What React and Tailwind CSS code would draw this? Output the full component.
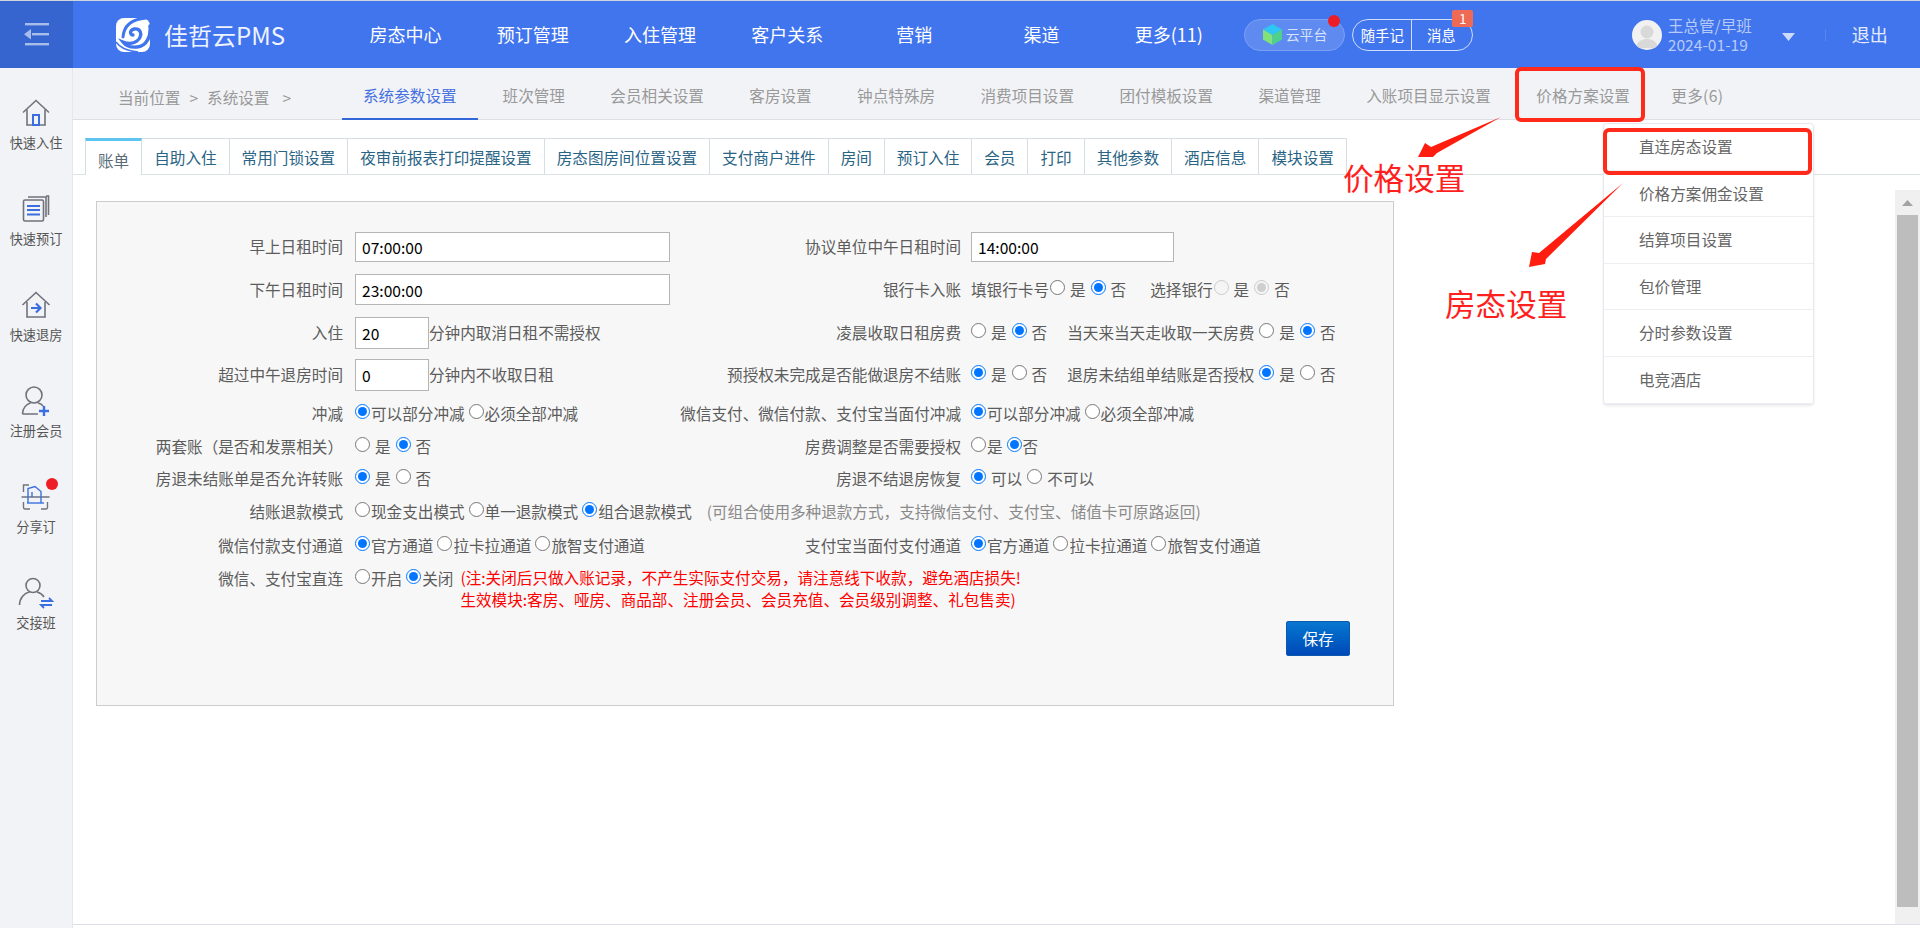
import { useState } from 'react';

const navItems = ['房态中心', '预订管理', '入住管理', '客户关系', '营销', '渠道', '更多(11)'];
const subTabs = ['班次管理', '会员相关设置', '客房设置', '钟点特殊房', '消费项目设置', '团付模板设置', '渠道管理', '入账项目显示设置', '价格方案设置'];
const innerTabs = ['自助入住', '常用门锁设置', '夜审前报表打印提醒设置', '房态图房间位置设置', '支付商户进件', '房间', '预订入住', '会员', '打印', '其他参数', '酒店信息', '模块设置'];
const menuItems = ['直连房态设置', '价格方案佣金设置', '结算项目设置', '包价管理', '分时参数设置', '电竞酒店'];

const IconHouse = () => (
  <svg width="30" height="28" viewBox="0 0 30 28" fill="none" stroke="#6f737c" strokeWidth="1.6">
    <path d="M2 13.5 15 1.5l13 12" />
    <path d="M6 10.5V26h18V10.5" />
    <rect x="12" y="16" width="6" height="10" stroke="#3b6fe0" strokeWidth="2" />
  </svg>
);

const IconBook = () => (
  <svg width="28" height="28" viewBox="0 0 28 28" fill="none" stroke="#6f737c" strokeWidth="1.6">
    <rect x="1.5" y="5" width="20" height="21" rx="1.5" />
    <path d="M6 2h18v20M24 1h2.5v19" />
    <path d="M5 11h13M5 15h13M5 19.5h13" stroke="#3b6fe0" strokeWidth="2.2" />
  </svg>
);

const IconCheckout = () => (
  <svg width="30" height="28" viewBox="0 0 30 28" fill="none" stroke="#6f737c" strokeWidth="1.6">
    <path d="M1.5 14 15 1.5 28.5 14" />
    <path d="M6 11v15h18V11" />
    <path d="M10 17h9M15 12.5l4.5 4.5-4.5 4.5" stroke="#3b6fe0" strokeWidth="2.2" />
  </svg>
);

const IconMember = () => (
  <svg width="30" height="32" viewBox="0 0 30 32" fill="none" stroke="#6f737c" strokeWidth="1.6">
    <circle cx="13" cy="10" r="8" />
    <path d="M1.5 29c0-6 4-10 8-11M17 18c2 .5 4 1.5 5 3M1.5 29H17" />
    <path d="M23 21v10M18 26h10" stroke="#3b6fe0" strokeWidth="2.4" />
  </svg>
);

const IconShare = () => (
  <svg width="30" height="28" viewBox="0 0 30 28" fill="none" stroke="#6f737c" strokeWidth="1.4">
    <path d="M8 2H2.5v7M2.5 19v5.5a1.5 1.5 0 0 0 1.5 1.5h5M20 26h5a1.5 1.5 0 0 0 1.5-1.5V19M.5 14h28" />
    <path d="M7 20V5.5l7-2 6 5V20M11 9v5" stroke="#3b6fe0" strokeWidth="1.4" />
    <path d="M6 20h17" stroke="#3b6fe0" strokeWidth="1.4" />
  </svg>
);

const IconShift = () => (
  <svg width="36" height="32" viewBox="0 0 36 32" fill="none" stroke="#6f737c" strokeWidth="1.6">
    <circle cx="15" cy="8.5" r="7" />
    <path d="M1.5 28c0-7 5-12 10-13M19 15c3 .8 5.5 2.5 7 5" />
    <path d="M23 24h11l-3-3M34 28H23l3 3" stroke="#3b6fe0" strokeWidth="1.8" />
  </svg>
);

const sideItems = [
  { label: '快速入住', icon: <IconHouse /> },
  { label: '快速预订', icon: <IconBook /> },
  { label: '快速退房', icon: <IconCheckout /> },
  { label: '注册会员', icon: <IconMember /> },
  { label: '分享订', icon: <IconShare />, dot: true },
  { label: '交接班', icon: <IconShift /> },
];

function Logo() {
  return (
    <svg width="34" height="34" viewBox="0 0 34 34" fill="none">
      <rect width="34" height="34" rx="8" fill="#fff" />
      <path d="M30 0C18 1 8 6 7 19" stroke="#4175ee" strokeWidth="3" strokeLinecap="round" />
      <path d="M34 8c1 10-3 20-13 21-6 .6-11-1-14-5 5 2 10 2 14-1 4-3 5-8 2-11-3-2-7-1-8 1-1 2 0 4 2 4" stroke="#4175ee" strokeWidth="3.4" strokeLinecap="round" />
      <path d="M0 24c4 6 11 9 22 10" stroke="#4175ee" strokeWidth="1.6" />
    </svg>
  );
}

function Radio({ checked, disabled, name }) {
  return <input type="radio" name={name} defaultChecked={checked} disabled={disabled} className="w-[15px] h-[15px] -translate-y-[2px] shrink-0" />;
}

// wide: the " 是 " kind of option, a space on each side of the text
function Opt({ name, text, checked, disabled, wide }) {
  return (
    <label className={wide ? 'flex items-center gap-[5px] mr-[5px]' : 'flex items-center gap-[1px] mr-[4px]'}>
      <Radio name={name} checked={checked} disabled={disabled} />
      <span>{text}</span>
    </label>
  );
}

function YesNo({ name, yes }) {
  return (
    <>
      <Opt wide name={name} text="是" checked={yes} />
      <Opt wide name={name} text="否" checked={!yes} />
    </>
  );
}

function Row({ h, label, children, rightLabel, right }) {
  return (
    <div className={`flex items-center whitespace-nowrap ${h}`}>
      <div className="w-[246px] mr-3 text-right">{label}</div>
      <div className={rightLabel ? 'w-[320px] flex items-center' : 'flex-1 flex items-center'}>{children}</div>
      {rightLabel && (
        <>
          <div className="w-[286px] mr-[10px] text-right">{rightLabel}</div>
          <div className="flex items-center">{right}</div>
        </>
      )}
    </div>
  );
}

function TextInput({ value, className }) {
  return (
    <input
      readOnly
      defaultValue={value}
      className={`border border-[#b5b5b5] bg-white text-black pl-[6px] outline-none ${className}`}
    />
  );
}

export default function App() {
  const [activeSub] = useState('系统参数设置');

  return (
    <div className="relative w-full h-[928px] overflow-hidden bg-white text-[15.6px] text-[#5c5c5c] font-['Noto_Sans_CJK_SC','Liberation_Sans',sans-serif]">
      {/* Top bar */}
      <div className="flex items-center h-[68px] bg-[#4175ee] border-t border-[#cfd4de] text-white">
        <div className="w-[73px] h-full bg-[#3765cf] flex items-center justify-center shrink-0">
          <svg width="26" height="23" viewBox="0 0 26 23" fill="#a9bdec">
            <rect x="1" y="0" width="24" height="2.4" />
            <rect x="8" y="10" width="17" height="2.4" />
            <rect x="1" y="20" width="24" height="2.4" />
            <path d="M0 11.200 7 6v10.500z" />
          </svg>
        </div>
        <div className="w-[269px] pl-[43px] flex items-center shrink-0">
          <Logo />
          <span className="ml-[14px] text-[24px] text-[#eef3ff] whitespace-nowrap">佳哲云PMS</span>
        </div>
        {navItems.map((item) => (
          <div key={item} className="w-[127.2px] text-center text-[18px] shrink-0 whitespace-nowrap">
            {item}
          </div>
        ))}
        <div className="relative ml-[11.5px] w-[101px] h-[32px] rounded-full bg-[#5f8bf1] border border-[#7ba0f4] flex items-center pl-[16px] gap-[2px] shrink-0">
          <svg width="23" height="23" viewBox="0 0 23 23">
            <path d="M11.500 1 21 6.500 11.500 12 2 6.500z" fill="#2ec6f5" />
            <path d="M2 6.500 11.500 12v10L2 16.500z" fill="#82e27a" />
            <path d="M21 6.500 11.500 12v10L21 16.500z" fill="#4fd18b" />
          </svg>
          <span className="text-[13.8px] text-[#d8e3fb] whitespace-nowrap">云平台</span>
          <span className="absolute right-[4px] -top-[5px] w-[12px] h-[12px] rounded-full bg-[#ee1c25]" />
        </div>
        <div className="relative ml-[7.500px] w-[121px] h-[32px] rounded-full border border-[#cfdcfa] flex items-center text-[14.4px] shrink-0">
          <span className="w-[59px] h-full flex items-center justify-center border-r border-[#cfdcfa]">随手记</span>
          <span className="flex-1 text-center pr-[2px]">消息</span>
          <span className="absolute -right-[1px] -top-[10px] w-[21px] h-[17px] bg-[#ef6a55] rounded-[2px] flex items-center justify-center text-[13px] leading-none">1</span>
        </div>
        <div className="ml-[158.500px] w-[30px] h-[30px] rounded-full bg-[#f1f1f1] overflow-hidden shrink-0">
          <svg width="30" height="30" viewBox="0 0 30 30" fill="#d9d9d9">
            <circle cx="15" cy="12" r="6.500" />
            <path d="M4 28c1-7 6-9 11-9s10 2 11 9z" />
          </svg>
        </div>
        <div className="ml-[6px] w-[114px] pt-[1px] text-[#b7caf8] text-[15.6px] leading-[19px] shrink-0 whitespace-nowrap">
          <div>王总管/早班</div>
          <div>2024-01-19</div>
        </div>
        <svg width="13" height="8" viewBox="0 0 13 8" fill="#cddafa" className="mt-[4px] shrink-0">
          <path d="M0 0h13L6.500 8z" />
        </svg>
        <div className="ml-[30px] w-px h-[12px] bg-[#5a86ea] shrink-0" />
        <div className="ml-[26px] text-[18px] text-[#e4ebfd] whitespace-nowrap">退出</div>
      </div>

      <div className="flex h-[860px]">
        {/* Left quick actions */}
        <div className="w-[73px] shrink-0 bg-[#f2f3f7] border-r border-[#e4e7f1] pt-[28.5px]">
          {sideItems.map((item) => (
            <div key={item.label} className="relative h-[96px] flex flex-col items-center text-[13.2px] text-[#555]">
              <div className="h-[32px] flex items-center justify-center">{item.icon}</div>
              <div className="mt-[5px] leading-[18px] whitespace-nowrap">{item.label}</div>
              {item.dot && <span className="absolute left-[46px] -top-[3px] w-[12px] h-[12px] rounded-full bg-[#ee1c25]" />}
            </div>
          ))}
        </div>

        <div className="flex-1 flex flex-col min-w-0 h-[857px] border-b border-[#dcdfe6]">
          {/* Sub navigation */}
          <div className="flex items-stretch h-[52px] bg-[#f2f3f7] border-b border-[#dcdfe6] text-[#999] whitespace-nowrap shrink-0">
            <div className="w-[269px] pl-[45px] pt-[19px] leading-[20px] flex gap-[9px] shrink-0">
              <span>当前位置</span>
              <span>&gt;</span>
              <span>系统设置</span>
              <span className="ml-[4px]">&gt;</span>
            </div>
            <div className="px-[21px] pt-[17px] leading-[20px] text-[#4470e0] border-b-2 border-[#3366d8] h-[52px]">{activeSub}</div>
            <div className="flex gap-[5.4px] ml-[5px]">
              {subTabs.map((tab) => (
                <div key={tab} className="px-5 pt-[17px] leading-[20px]">
                  {tab}
                </div>
              ))}
              <div className="pl-4 pt-[17px] leading-[20px] tracking-[0.3px]">更多(6)</div>
            </div>
          </div>

          {/* Inner tabs */}
          <div className="mt-[18px] h-[37px] pl-3 flex border-b border-[#dde2e5] text-[#2a6485] whitespace-nowrap shrink-0">
            <div className="h-[37px] px-3 pt-[7px] leading-[24px] bg-white border-x border-[#d5dee2] border-t-[3px] border-t-[#5ec5f0] text-[#5b6b76]">账单</div>
            {innerTabs.map((tab) => (
              <div key={tab} className="h-[36px] px-3 pt-[6px] leading-[24px] border-t border-r border-[#d5dee2]">
                {tab}
              </div>
            ))}
          </div>

          <div className="flex flex-1 min-h-0">
            {/* Settings form */}
            <div className="flex-1 pl-[23px] pt-[26px]">
              <div className="w-[1298px] h-[505px] bg-[#f7f7f7] border border-[#ccc] pt-[23px]">
                <Row h="h-[43px]" label="早上日租时间" rightLabel="协议单位中午日租时间" right={<TextInput value="14:00:00" className="w-[203px] h-[30px]" />}>
                  <TextInput value="07:00:00" className="w-[315px] h-[30px]" />
                </Row>
                <Row
                  h="h-[43px]"
                  label="下午日租时间"
                  rightLabel="银行卡入账"
                  right={
                    <>
                      <span className="mr-[1px]">填银行卡号</span>
                      <YesNo name="bankCard" />
                      <span className="ml-[19px] mr-[1px]">选择银行</span>
                      <Opt wide disabled name="bank" text="是" />
                      <Opt wide disabled checked name="bank" text="否" />
                    </>
                  }
                >
                  <TextInput value="23:00:00" className="w-[315px] h-[31px]" />
                </Row>
                <Row
                  h="h-[43px]"
                  label="入住"
                  rightLabel="凌晨收取日租房费"
                  right={
                    <>
                      <YesNo name="dawn" />
                      <span className="ml-[15px] mr-[5px]">当天来当天走收取一天房费</span>
                      <YesNo name="sameDay" />
                    </>
                  }
                >
                  <TextInput value="20" className="w-[74px] h-[32px]" />
                  <span>分钟内取消日租不需授权</span>
                </Row>
                <Row
                  h="h-[42px]"
                  label="超过中午退房时间"
                  rightLabel="预授权未完成是否能做退房不结账"
                  right={
                    <>
                      <YesNo name="preAuth" yes />
                      <span className="ml-[15px] mr-[5px]">退房未结组单结账是否授权</span>
                      <YesNo name="groupAuth" yes />
                    </>
                  }
                >
                  <TextInput value="0" className="w-[74px] h-[32px]" />
                  <span>分钟内不收取日租</span>
                </Row>
                <Row
                  h="h-[36px]"
                  label="冲减"
                  rightLabel="微信支付、微信付款、支付宝当面付冲减"
                  right={
                    <>
                      <Opt checked name="payOffset" text="可以部分冲减" />
                      <Opt name="payOffset" text="必须全部冲减" />
                    </>
                  }
                >
                  <Opt checked name="offset" text="可以部分冲减" />
                  <Opt name="offset" text="必须全部冲减" />
                </Row>
                <Row
                  h="h-[29px]"
                  label="两套账（是否和发票相关）"
                  rightLabel="房费调整是否需要授权"
                  right={
                    <>
                      <Opt name="adjust" text="是" />
                      <Opt checked name="adjust" text="否" />
                    </>
                  }
                >
                  <YesNo name="twoBooks" />
                </Row>
                <Row
                  h="h-[36px]"
                  label="房退未结账单是否允许转账"
                  rightLabel="房退不结退房恢复"
                  right={
                    <>
                      <Opt wide checked name="restore" text="可以" />
                      <Opt wide name="restore" text="不可以" />
                    </>
                  }
                >
                  <YesNo name="transfer" yes />
                </Row>
                <Row h="h-[30px]" label="结账退款模式">
                  <Opt name="refund" text="现金支出模式" />
                  <Opt name="refund" text="单一退款模式" />
                  <Opt checked name="refund" text="组合退款模式" />
                  <span className="ml-[11px] text-[#8a8a8a]">(可组合使用多种退款方式，支持微信支付、支付宝、储值卡可原路返回)</span>
                </Row>
                <Row
                  h="h-[38px]"
                  label="微信付款支付通道"
                  rightLabel="支付宝当面付支付通道"
                  right={
                    <>
                      <Opt checked name="aliChannel" text="官方通道" />
                      <Opt name="aliChannel" text="拉卡拉通道" />
                      <Opt name="aliChannel" text="旅智支付通道" />
                    </>
                  }
                >
                  <Opt checked name="wxChannel" text="官方通道" />
                  <Opt name="wxChannel" text="拉卡拉通道" />
                  <Opt name="wxChannel" text="旅智支付通道" />
                </Row>
                <div className="flex items-start h-[45px] pt-[1px] whitespace-nowrap">
                  <div className="w-[246px] mr-3 text-right leading-[24px]">微信、支付宝直连</div>
                  <div className="flex items-start leading-[24px]">
                    <div className="flex items-center h-[24px]">
                      <Opt name="direct" text="开启" />
                      <Opt checked name="direct" text="关闭" />
                    </div>
                    <div className="ml-[3px] text-[#f00] leading-[22px]">
                      <div>(注:关闭后只做入账记录，不产生实际支付交易，请注意线下收款，避免酒店损失!</div>
                      <div>生效模块:客房、哑房、商品部、注册会员、会员充值、会员级别调整、礼包售卖)</div>
                    </div>
                  </div>
                </div>
                <div className="flex justify-end pr-[43px] mt-[11px]">
                  <button className="w-[64px] h-[35px] rounded-[2px] text-white bg-gradient-to-b from-[#0a77cf] to-[#0048b8] border border-[#0a5ab0]">保存</button>
                </div>
              </div>
            </div>

            {/* Scrollbar */}
            <div className="w-[25px] shrink-0 mt-[15px] bg-[#f0f0f0] flex flex-col items-center">
              <div className="h-[25px] flex items-center justify-center">
                <svg width="11" height="6" viewBox="0 0 11 6" fill="#a3a3a3">
                  <path d="M5.500 0 11 6H0z" />
                </svg>
              </div>
              <div className="w-[21px] h-[692px] bg-[#bdbdbd]" />
            </div>
          </div>
        </div>
      </div>

      {/* Hover menu */}
      <div className="absolute left-[1603px] top-[123px] w-[211px] h-[282px] bg-white border border-[#e6e8f0] rounded-[4px] shadow-[0_1px_3px_rgba(0,0,0,0.08)] text-[#666]">
        {menuItems.map((item) => (
          <div key={item} className="h-[46.6px] pl-[35px] flex items-center border-b border-[#eeeef2] whitespace-nowrap">
            {item}
          </div>
        ))}
      </div>

      {/* Annotations drawn on the screenshot */}
      <div className="absolute left-[1515px] top-[67px] w-[130px] h-[55px] border-4 border-[#ff2a1a] rounded-[6px]" />
      <div className="absolute left-[1603px] top-[128px] w-[209px] h-[47px] border-4 border-[#ff2a1a] rounded-[6px]" />
      <svg className="absolute left-0 top-0 pointer-events-none" width="1920" height="928" fill="#ff1d10">
        <path d="M1501 117 1431 147 1425 143 1418 157 1433 157 1437 153z" />
        <path d="M1623 183 1539 253 1532 252 1529 267 1545 264 1546 259z" />
      </svg>
      <div className="absolute left-[1343px] top-[156px] text-[30.6px] leading-[42px] text-[#ff1f1f] whitespace-nowrap">价格设置</div>
      <div className="absolute left-[1445px] top-[282px] text-[30.6px] leading-[42px] text-[#ff1f1f] whitespace-nowrap">房态设置</div>
    </div>
  );
}
